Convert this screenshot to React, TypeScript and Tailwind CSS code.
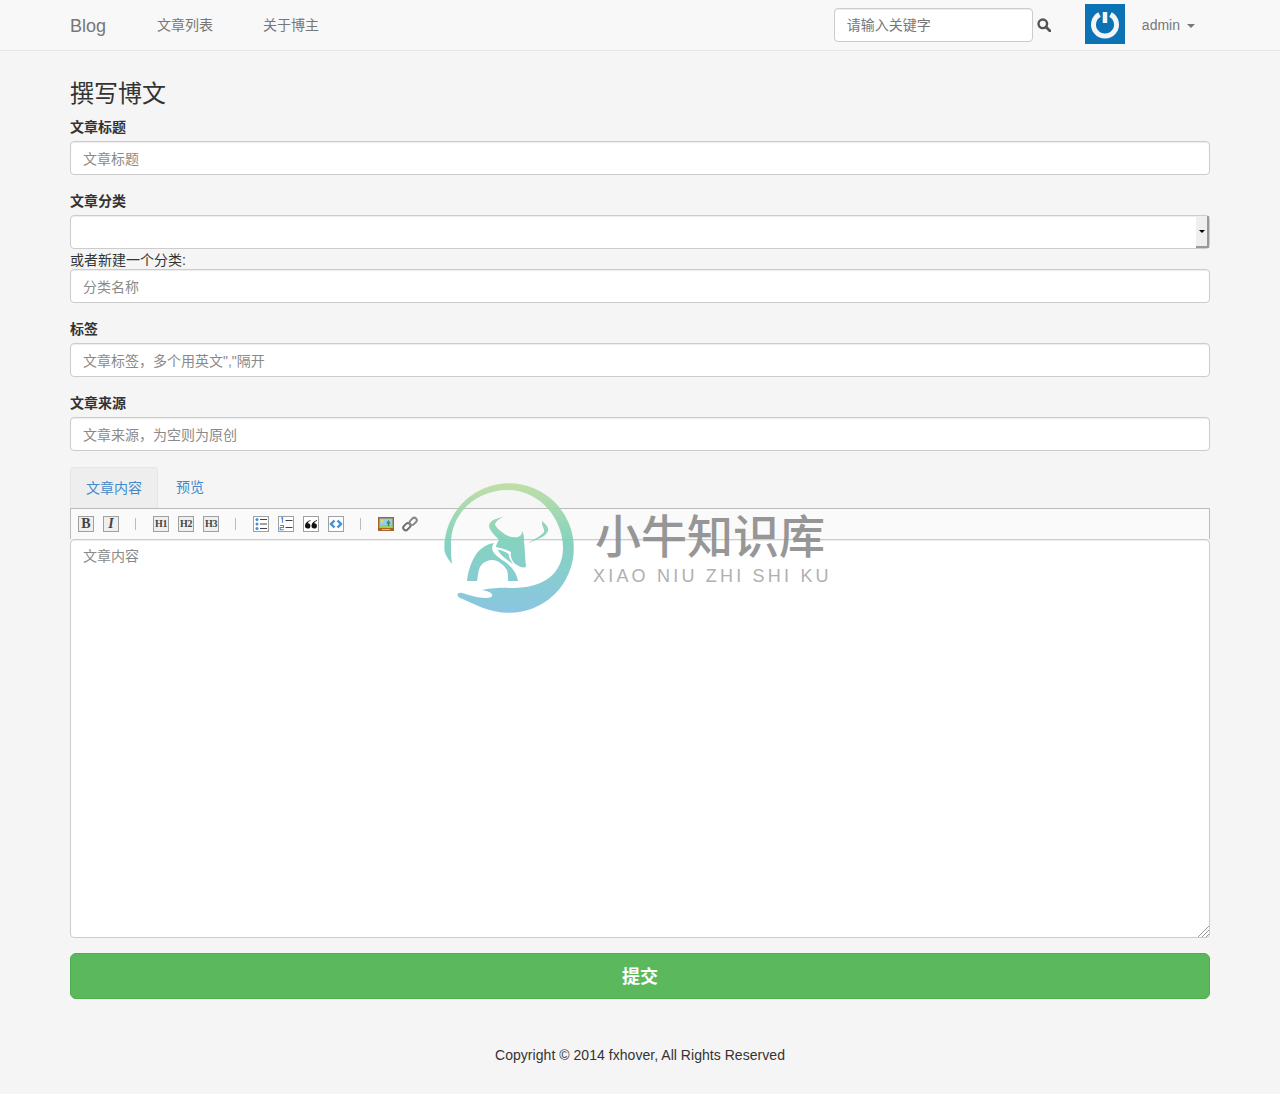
const fontStack = "font-['Liberation_Sans','Noto_Sans_CJK_SC',sans-serif]";

const Field = ({ label, placeholder }: { label: string; placeholder: string }) => (
  <div className="mb-4">
    <label className="mb-1 block h-5 text-[14px] leading-5 font-bold text-[#333]">{label}</label>
    <TextInput placeholder={placeholder} />
  </div>
);

const TextInput = ({ placeholder }: { placeholder: string }) => (
  <input
    className="block h-[34px] w-full rounded border border-[#ccc] bg-white px-3 pt-[2px] text-[14px] text-[#555] shadow-[inset_0_1px_1px_rgba(0,0,0,0.075)] outline-none placeholder:text-[#8a8a8a]"
    placeholder={placeholder}
  />
);

const Box = ({ children, white }: { children?: React.ReactNode; white?: boolean }) => (
  <div
    className={
      "flex h-[16px] w-[16px] shrink-0 items-center justify-center border border-[#a0a0a0] " +
      (white ? "bg-white" : "bg-[#efefef]")
    }
  >
    {children}
  </div>
);

const Letter = ({ children, italic }: { children: React.ReactNode; italic?: boolean }) => (
  <Box>
    <span
      className={
        "font-['Liberation_Serif',serif] text-[14px] leading-none font-bold text-[#444] " +
        (italic ? "italic" : "")
      }
    >
      {children}
    </span>
  </Box>
);

const Heading = ({ children }: { children: React.ReactNode }) => (
  <Box>
    <span className="font-['Liberation_Serif',serif] text-[10px] leading-none font-bold tracking-[-0.3px] text-[#444]">
      {children}
    </span>
  </Box>
);

const Sep = () => <div className="mr-2 ml-[7px] h-[12px] w-px shrink-0 bg-[#bbb]" />;

const Toolbar = () => (
  <div className="flex h-[31px] items-center gap-[9px] border-x border-t border-[#bbb] bg-[#fafafa] pl-[7px]">
    <Letter>B</Letter>
    <Letter italic>I</Letter>
    <Sep />
    <Heading>H1</Heading>
    <Heading>H2</Heading>
    <Heading>H3</Heading>
    <Sep />
    <Box white>
      <svg width="14" height="14" viewBox="0 0 14 14">
        <circle cx="3" cy="2.500" r="1.500" fill="#3f8fdc" />
        <circle cx="3" cy="7" r="1.500" fill="#3f8fdc" />
        <circle cx="3" cy="11.500" r="1.500" fill="#3f8fdc" />
        <path d="M6 2.500h7M6 7h7M6 11.500h7" stroke="#444" strokeWidth="1" />
      </svg>
    </Box>
    <Box white>
      <svg width="14" height="14" viewBox="0 0 14 14">
        <path d="M2 1.500l1.500-.8v5" stroke="#3f8fdc" strokeWidth="1.200" fill="none" />
        <path d="M1 8.500h3.500v2H1.200v2.200h3.600" stroke="#3f8fdc" strokeWidth="1.100" fill="none" />
        <path d="M6.500 3.500h7M6.500 10.500h7" stroke="#444" strokeWidth="1" />
      </svg>
    </Box>
    <Box white>
      <svg width="14" height="14" viewBox="0 0 14 14">
        <path
          d="M6.500 3C3.500 4 1 6 1 8.800a2.700 2.700 0 1 0 2.800-2.600c.2-1 1.200-1.800 2.700-2.200zM13 3c-3 1-5.500 3-5.500 5.800a2.700 2.700 0 1 0 2.800-2.600c.2-1 1.200-1.800 2.700-2.200z"
          fill="#111"
        />
      </svg>
    </Box>
    <Box white>
      <svg width="14" height="14" viewBox="0 0 14 14" fill="none">
        <path d="M5.500 3.500 2 7l3.500 3.500M8.500 3.500 12 7l-3.500 3.500" stroke="#3f8fdc" strokeWidth="2.400" />
      </svg>
    </Box>
    <Sep />
    <svg className="shrink-0" width="16" height="14" viewBox="0 0 16 14">
      <rect width="16" height="14" fill="#a8651f" />
      <rect x="1.500" y="1.500" width="13" height="9.500" fill="#8fd0f0" />
      <rect x="1.500" y="8" width="13" height="3" fill="#9ccc65" />
      <circle cx="4" cy="4" r="1.500" fill="#ffd54f" />
      <path d="M10.500 3l2.300 3.500h-1.500V9h-1.600V6.500H8.200z" fill="#3f8f3f" />
      <rect x="4" y="12" width="8" height="1" fill="#f3c14b" />
    </svg>
    <svg className="-ml-[1px] shrink-0" width="16" height="16" viewBox="0 0 16 16" fill="none">
      <rect x="0.800" y="8.200" width="8" height="5" rx="2.500" transform="rotate(-45 4.800 10.700)" stroke="#6f6f6f" strokeWidth="2" />
      <rect x="7.200" y="2.800" width="8" height="5" rx="2.500" transform="rotate(-45 11.200 5.300)" stroke="#888" strokeWidth="2" />
    </svg>
  </div>
);

const Watermark = () => (
  <div className="pointer-events-none absolute top-[483px] left-[444px] flex h-[130px] w-[390px] opacity-90">
    <svg width="130" height="130" viewBox="444 483 130 130">
      <defs>
        <linearGradient id="wm" gradientUnits="userSpaceOnUse" x1="0" y1="483" x2="0" y2="613">
          <stop offset="0" stopColor="#bcdd9e" />
          <stop offset="0.45" stopColor="#78cfba" />
          <stop offset="1" stopColor="#7fbfdf" />
        </linearGradient>
      </defs>
      <path
        fill="url(#wm)"
        d="M452 564C447 558 444.300 553 444.300 548A64.500 64.500 0 0 1 573.800 548A64.500 64.500 0 0 1 508 612.800C490 612.800 474 604 460 598C456 596 457 592 462 593C470 595 477 598 486 598C495 598 495 592 482 590C498 587 506 588 513 588C544 588 563 573 563 548C563 518 539 490 508 490C474 490 451 515 451 543C451 551 451 558 452 564Z"
      />
      <path
        fill="url(#wm)"
        d="M503 517C496 518 489 521 489 526C490 532 496 536 499 540C497 543 496 545 496 547C500 548 505 549 511 552C510 556 512 562 517 565C520 567 523 568 526 567C525 558 525 550 524 541C524 537 524 534 522 531C522 534 521 536 518 537C512 538 506 536 502 532C498 529 495 526 495 524C496 521 499 519 503 517Z"
      />
      <path
        fill="url(#wm)"
        d="M494 543C487 544 481 548 477 553C472 560 468 570 467 581H477C478 576 478 571 480 567C483 562 488 560 492 560C498 560 504 565 507 570C508 574 508 577 508 581H518C517 575 514 570 510 566C505 561 498 558 495 554C492 551 491 547 494 543Z"
      />
      <path fill="url(#wm)" d="M497.500 549.500C502 550.500 506 552 508.500 554C509 558 511 561 513 564C507 560 501 556 497.500 549.500Z" />
      <path
        fill="url(#wm)"
        d="M542 521C546 524 549 528 548 531C546 536 539 539 528 543C535 539 541 536 544 532C545 529 541 525 542 521Z"
      />
    </svg>
    <div className="ml-[21px] flex flex-col">
      <span className="mt-[25px] h-[58px] text-[46px] leading-[58px] font-medium whitespace-nowrap text-[#8c8c8c]">
        小牛知识库
      </span>
      <span className="-ml-[2px] text-[18px] leading-[20px] font-light tracking-[3.200px] whitespace-nowrap text-[#a8a8a8]">
        XIAO NIU ZHI SHI KU
      </span>
    </div>
  </div>
);

export default function App() {
  return (
    <div className={"relative min-h-[1094px] bg-[#f5f5f5] " + fontStack}>
      <nav className="flex h-[51px] items-center border-b border-[#e7e7e7] bg-[#f8f8f8] pr-[85px] pl-[70px] text-[14px] text-[#777]">
        <span className="mt-[2px] w-[87px] shrink-0 text-[18px]">Blog</span>
        <span className="w-[106px] shrink-0">文章列表</span>
        <span className="shrink-0">关于博主</span>
        <div className="flex-1" />
        <input
          className="h-[34px] w-[199px] rounded border border-[#ccc] bg-white px-3 text-[14px] shadow-[inset_0_1px_1px_rgba(0,0,0,0.075)] outline-none placeholder:text-[#777]"
          placeholder="请输入关键字"
        />
        <svg className="ml-[4px] shrink-0" width="14" height="14" viewBox="0 0 14 14" fill="none">
          <circle cx="5.800" cy="5.800" r="4.300" stroke="#555" strokeWidth="2.400" />
          <path d="M9 9l4 4" stroke="#555" strokeWidth="2.800" strokeLinecap="round" />
        </svg>
        <div className="mt-[-2px] ml-[34px] flex h-10 w-10 shrink-0 items-center justify-center bg-[#0b72b5]">
          <svg width="32" height="32" viewBox="0 0 32 32" fill="none">
            <path d="M10.500 6.500a11.500 11.500 0 1 0 11 0" stroke="#f4f4f4" strokeWidth="5" />
            <path d="M16 4v11" stroke="#f4f4f4" strokeWidth="4.500" />
          </svg>
        </div>
        <span className="ml-[17px] shrink-0">admin</span>
        <span className="mt-[2px] ml-[7px] border-x-[4px] border-t-[4px] border-x-transparent border-t-[#777]" />
      </nav>

      <main className="px-[70px] pt-[30px] text-[14px] text-[#333]">
        <h3 className="mb-[10px] text-[24px] leading-[26px] text-[#333]">撰写博文</h3>
        <Field label="文章标题" placeholder="文章标题" />

        <label className="mb-1 block h-5 text-[14px] leading-5 font-bold">文章分类</label>
        <div className="flex h-[34px] justify-end rounded border border-[#ccc] bg-white shadow-[inset_0_1px_1px_rgba(0,0,0,0.075)]">
          <div className="flex w-[13px] items-center justify-center border-r-2 border-b-2 border-[#999] bg-[#efefef]">
            <span className="border-x-[3px] border-t-[3px] border-x-transparent border-t-black" />
          </div>
        </div>
        <div className="mt-px mb-4">
          <label className="-mb-px block h-5 leading-5">或者新建一个分类:</label>
          <TextInput placeholder="分类名称" />
        </div>
        <Field label="标签" placeholder={'文章标签，多个用英文","隔开'} />
        <Field label="文章来源" placeholder="文章来源，为空则为原创" />

        <div className="flex h-[41px]">
          <span className="flex w-[88px] items-center justify-center rounded-t border-x border-t border-[#e5e5e5] bg-[#eee] text-[#428bca]">
            文章内容
          </span>
          <span className="flex w-[64px] items-center justify-center text-[#428bca]">预览</span>
        </div>
        <Toolbar />
        <div className="relative">
          <textarea
            className="block h-[399px] w-full resize-none rounded border border-[#ccc] bg-white px-3 py-[6px] text-[14px] shadow-[inset_0_1px_1px_rgba(0,0,0,0.075)] outline-none placeholder:text-[#8a8a8a]"
            placeholder="文章内容"
          />
          <svg className="absolute right-[1px] bottom-[1px]" width="11" height="11" viewBox="0 0 11 11">
            <path d="M0 11 11 0M4 11l7-7M8 11l3-3" stroke="#999" strokeWidth="1" />
          </svg>
        </div>
        <button className="mt-[15px] block h-[46px] w-full rounded-md border border-[#4cae4c] bg-[#5cb85c] pt-[2px] text-[18px] font-bold text-white">
          提交
        </button>
        <footer className="mt-[46px] text-center leading-5 tracking-[0.04px] text-[#333]">
          Copyright © 2014 fxhover, All Rights Reserved
        </footer>
      </main>
      <Watermark />
    </div>
  );
}
